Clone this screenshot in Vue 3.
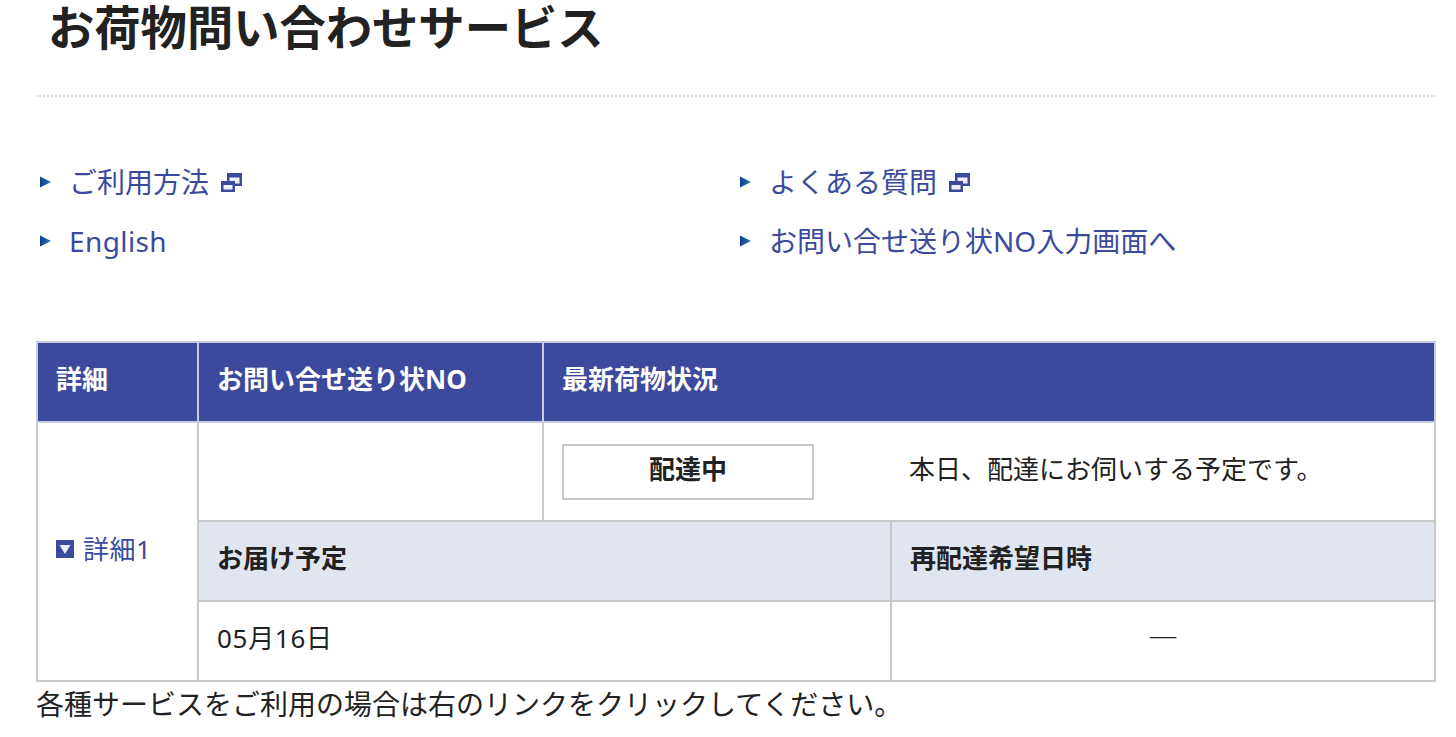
<script setup>
const links = [
  { text: 'ご利用方法', ext: true },
  { text: 'よくある質問', ext: true },
  { text: 'English', ext: false, latin: true },
  { text: 'お問い合せ送り状NO入力画面へ', ext: false },
]
</script>

<template>
  <div class="page">
    <h1 class="title">お荷物問い合わせサービス</h1>
    <ul class="links">
      <li v-for="l in links" :key="l.text" class="link-item">
        <svg class="arrow" width="11" height="12" viewBox="0 0 11 12">
          <defs>
            <linearGradient id="arrowFill" x1="0" y1="0" x2="1" y2="0">
              <stop offset="0" stop-color="#123f8c" />
              <stop offset="1" stop-color="#2b79c4" />
            </linearGradient>
          </defs>
          <path d="M0 0.5L11 6L0 11.5Z" fill="url(#arrowFill)" />
        </svg>
        <a class="link" :class="{ latin: l.latin }">{{ l.text }}</a>
        <svg v-if="l.ext" class="ext" width="21" height="19" viewBox="0 0 21 19">
          <rect x="6" y="0" width="15" height="13" fill="#3c4a9e" />
          <rect x="8.5" y="4.5" width="10" height="6" fill="#eef0fa" />
          <rect x="0" y="8" width="14" height="11" fill="#3c4a9e" />
          <rect x="2.5" y="12" width="9" height="4.5" fill="#eef0fa" />
        </svg>
      </li>
    </ul>
    <table class="table">
      <colgroup>
        <col class="c1" /><col class="c2" /><col class="c3" /><col />
      </colgroup>
      <tbody>
        <tr class="head">
          <th>詳細</th>
          <th>お問い合せ送り状NO</th>
          <th colspan="2">最新荷物状況</th>
        </tr>
        <tr class="r-status">
          <td rowspan="3" class="detail">
            <span class="detail-inner">
              <svg width="18" height="18" viewBox="0 0 18 18"><rect width="18" height="18" fill="#3c4a9e" /><path d="M3.5 5H14.5L9 14Z" fill="#eef0fa" /></svg>
              <a class="link small">詳細1</a>
            </span>
          </td>
          <td></td>
          <td colspan="2">
            <div class="status">
              <div class="badge">配達中</div>
              <div class="msg">本日、配達にお伺いする予定です。</div>
            </div>
          </td>
        </tr>
        <tr class="sub">
          <th colspan="2">お届け予定</th>
          <th>再配達希望日時</th>
        </tr>
        <tr class="r-val">
          <td colspan="2" class="date">05月16日</td>
          <td class="center">―</td>
        </tr>
      </tbody>
    </table>
    <p class="note">各種サービスをご利用の場合は右のリンクをクリックしてください。</p>
  </div>
</template>

<style>
html, body { margin: 0; background: #fff; overflow: hidden; }
</style>

<style scoped>
.page {
  width: 1400px;
  margin-left: 36px;
  font-family: "Noto Sans", "Noto Sans CJK JP", sans-serif;
  color: #222;
  height: 737px;
  overflow: hidden;
}
.title {
  margin: 0;
  padding: 0 0 37px 12px;
  height: 58px;
  line-height: 58px;
  font-size: 46.3px;
  font-weight: 700;
  border-bottom: 2px dotted #ddd;
  font-family: "Liberation Sans", "Noto Sans CJK JP", sans-serif;
}
.links {
  list-style: none;
  margin: 0;
  padding: 65px 0 0;
  display: grid;
  grid-template-columns: 700px 1fr;
  row-gap: 19px;
}
.link-item {
  display: flex;
  align-items: center;
  height: 40px;
}
.arrow { margin: 0 18px 0 4px; flex: none; }
.link { color: #3c4a9e; font-size: 28px; line-height: 40px; }
.link.latin { letter-spacing: 0.4px; }
.link.small { font-size: 26px; letter-spacing: 0.5px; }
.ext { margin-left: 12px; }
.table {
  margin-top: 80px;
  width: 1400px;
  border-collapse: collapse;
  table-layout: fixed;
  font-size: 26px;
}
.c1 { width: 161px; }
.c2 { width: 345px; }
.c3 { width: 348px; }
th, td {
  border: 2px solid #c8c8c8;
  padding: 0 0 8px 18px;
  text-align: left;
  box-sizing: border-box;
}
.head th {
  background: #3c4a9e;
  color: #fff;
  height: 80px;
  font-weight: 700;
  border-color: #c8cbdc;
}
.r-status td { height: 99px; padding-bottom: 0; }
.r-status td.detail { padding-bottom: 6px; height: auto; }
.sub th { background: #e1e5ef; height: 80px; font-weight: 700; }
.r-val td { height: 80px; }
.date { letter-spacing: 0.7px; }
.center {
  text-align: center;
  font-family: "Noto Sans CJK JP", sans-serif;
  font-size: 31px;
  line-height: 40px;
  padding-left: 0;
  padding-bottom: 11px;
  color: #222;
}
.detail { vertical-align: middle; }
.detail-inner { display: flex; align-items: center; gap: 9px; }
.status { display: flex; align-items: center; }
.badge {
  width: 252px;
  height: 56px;
  box-sizing: border-box;
  padding-bottom: 8px;
  border: 2px solid #c8c8c8;
  display: flex;
  align-items: center;
  justify-content: center;
  font-weight: 700;
}
.msg { margin-left: 95px; padding-bottom: 8px; }
.note {
  margin: 0;
  font-size: 28px;
  line-height: 44px;
}
</style>
